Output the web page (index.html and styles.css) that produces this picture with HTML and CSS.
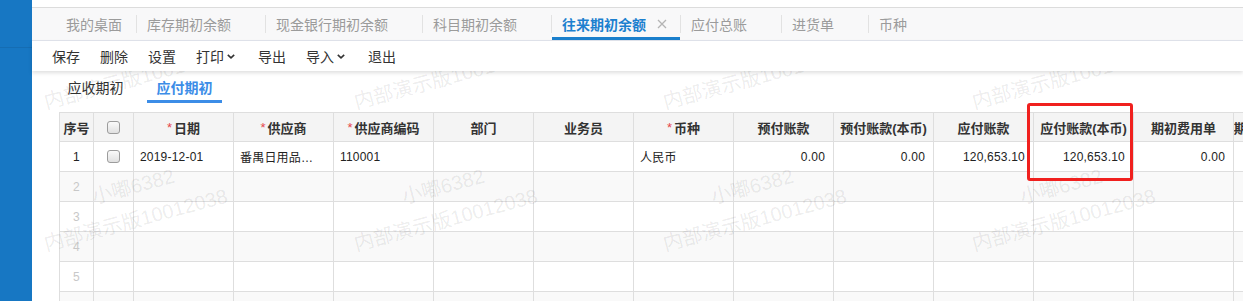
FILE: index.html
```html
<!DOCTYPE html>
<html lang="zh-CN">
<head>
<meta charset="utf-8">
<title>往来期初余额</title>
<link rel="stylesheet" href="styles.css">
</head>
<body>
<div class="sidebar"></div>
<div class="main">
  <div class="topstrip"></div>
  <div class="tabbar">
    <div class="tab first">我的桌面</div>
    <span class="sep"></span>
    <div class="tab">库存期初余额</div>
    <span class="sep"></span>
    <div class="tab">现金银行期初余额</div>
    <span class="sep"></span>
    <div class="tab">科目期初余额</div>
    <span class="sep"></span>
    <div class="tab active">往来期初余额<svg class="close" width="10" height="10" viewBox="0 0 10 10"><path d="M1 1L9 9M9 1L1 9" stroke="#b4b4b4" stroke-width="1.3" fill="none"/></svg></div>
    <span class="sep"></span>
    <div class="tab">应付总账</div>
    <span class="sep"></span>
    <div class="tab">进货单</div>
    <span class="sep"></span>
    <div class="tab">币种</div>
  </div>
  <div class="toolbar">
    <span class="tool">保存</span>
    <span class="tool">删除</span>
    <span class="tool">设置</span>
    <span class="tool">打印<svg class="chev" width="8" height="5" viewBox="0 0 8 5"><path d="M0.8 0.8L4 3.8L7.2 0.8" stroke="#333" stroke-width="1.6" fill="none"/></svg></span>
    <span class="tool">导出</span>
    <span class="tool">导入<svg class="chev" width="8" height="5" viewBox="0 0 8 5"><path d="M0.8 0.8L4 3.8L7.2 0.8" stroke="#333" stroke-width="1.6" fill="none"/></svg></span>
    <span class="tool">退出</span>
  </div>
  <div class="content">
    <div class="subtabs">
      <span class="subtab">应收期初</span>
      <span class="subtab active">应付期初</span>
    </div>
    <div class="grid">
      <div class="row head">
        <div class="cell c-no">序号</div>
        <div class="cell c-cb"><span class="cb"></span></div>
        <div class="cell"><span class="req">*</span>日期</div>
        <div class="cell"><span class="req">*</span>供应商</div>
        <div class="cell"><span class="req">*</span>供应商编码</div>
        <div class="cell">部门</div>
        <div class="cell">业务员</div>
        <div class="cell"><span class="req">*</span>币种</div>
        <div class="cell">预付账款</div>
        <div class="cell">预付账款(本币)</div>
        <div class="cell">应付账款</div>
        <div class="cell">应付账款(本币)</div>
        <div class="cell">期初费用单</div>
        <div class="cell">期初费用单(本币)</div>
      </div>
      <div class="row">
        <div class="cell c-no">1</div>
        <div class="cell c-cb"><span class="cb"></span></div>
        <div class="cell">2019-12-01</div>
        <div class="cell">番禺日用品…</div>
        <div class="cell">110001</div>
        <div class="cell"></div>
        <div class="cell"></div>
        <div class="cell">人民币</div>
        <div class="cell num">0.00</div>
        <div class="cell num">0.00</div>
        <div class="cell num">120,653.10</div>
        <div class="cell num">120,653.10</div>
        <div class="cell num">0.00</div>
        <div class="cell"></div>
      </div>
      <div class="row alt empty">
        <div class="cell c-no">2</div><div class="cell c-cb"></div><div class="cell"></div><div class="cell"></div><div class="cell"></div><div class="cell"></div><div class="cell"></div><div class="cell"></div><div class="cell"></div><div class="cell"></div><div class="cell"></div><div class="cell"></div><div class="cell"></div><div class="cell"></div>
      </div>
      <div class="row empty">
        <div class="cell c-no">3</div><div class="cell c-cb"></div><div class="cell"></div><div class="cell"></div><div class="cell"></div><div class="cell"></div><div class="cell"></div><div class="cell"></div><div class="cell"></div><div class="cell"></div><div class="cell"></div><div class="cell"></div><div class="cell"></div><div class="cell"></div>
      </div>
      <div class="row alt empty">
        <div class="cell c-no">4</div><div class="cell c-cb"></div><div class="cell"></div><div class="cell"></div><div class="cell"></div><div class="cell"></div><div class="cell"></div><div class="cell"></div><div class="cell"></div><div class="cell"></div><div class="cell"></div><div class="cell"></div><div class="cell"></div><div class="cell"></div>
      </div>
      <div class="row empty">
        <div class="cell c-no">5</div><div class="cell c-cb"></div><div class="cell"></div><div class="cell"></div><div class="cell"></div><div class="cell"></div><div class="cell"></div><div class="cell"></div><div class="cell"></div><div class="cell"></div><div class="cell"></div><div class="cell"></div><div class="cell"></div><div class="cell"></div>
      </div>
      <div class="row alt empty">
        <div class="cell c-no">6</div><div class="cell c-cb"></div><div class="cell"></div><div class="cell"></div><div class="cell"></div><div class="cell"></div><div class="cell"></div><div class="cell"></div><div class="cell"></div><div class="cell"></div><div class="cell"></div><div class="cell"></div><div class="cell"></div><div class="cell"></div>
      </div>
    </div>
    <div class="wm-layer">
      <span class="wm" style="left:63px;top:-26px">小嘟6382</span>
      <span class="wm" style="left:373px;top:-26px">小嘟6382</span>
      <span class="wm" style="left:682px;top:-26px">小嘟6382</span>
      <span class="wm" style="left:991px;top:-26px">小嘟6382</span>
      <span class="wm" style="left:15px;top:21px">内部演示版10012038</span>
      <span class="wm" style="left:325px;top:21px">内部演示版10012038</span>
      <span class="wm" style="left:634px;top:21px">内部演示版10012038</span>
      <span class="wm" style="left:943px;top:21px">内部演示版10012038</span>
      <span class="wm" style="left:63px;top:116px">小嘟6382</span>
      <span class="wm" style="left:373px;top:116px">小嘟6382</span>
      <span class="wm" style="left:682px;top:116px">小嘟6382</span>
      <span class="wm" style="left:991px;top:116px">小嘟6382</span>
      <span class="wm" style="left:15px;top:163px">内部演示版10012038</span>
      <span class="wm" style="left:325px;top:163px">内部演示版10012038</span>
      <span class="wm" style="left:634px;top:163px">内部演示版10012038</span>
      <span class="wm" style="left:943px;top:163px">内部演示版10012038</span>
    </div>
  </div>
</div>
<div class="highlight"></div>
</body>
</html>
```
FILE: styles.css
```css
html, body {
  margin: 0;
  padding: 0;
}
body {
  width: 1243px;
  height: 301px;
  overflow: hidden;
  display: flex;
  position: relative;
  background: #fff;
  font-family: "Liberation Sans", "Noto Sans CJK SC", sans-serif;
  color: #333;
}
.sidebar {
  width: 32px;
  flex: none;
  background: #1777c3;
  position: relative;
}
.sidebar::after {
  content: "";
  position: absolute;
  left: 0;
  right: 0;
  top: 47px;
  height: 1px;
  background: rgba(0, 0, 0, 0.08);
}
.main {
  flex: 1;
  min-width: 0;
  display: flex;
  flex-direction: column;
}
.topstrip {
  height: 7px;
  border-bottom: 1px solid #dcdcdc;
  flex: none;
}
.tabbar {
  height: 33px;
  box-sizing: border-box;
  flex: none;
  display: flex;
  align-items: stretch;
  background: #f8f8f9;
  border-bottom: 1px solid #e1e4ec;
  padding-left: 24px;
}
.tab {
  display: flex;
  align-items: center;
  padding: 0 34px 0 10px;
  font-size: 14px;
  color: #9b9b9b;
  white-space: nowrap;
}
.tab.first {
  padding-right: 14px;
}
.tab.active {
  color: #1c80cf;
  font-weight: bold;
  padding-right: 13px;
  box-shadow: inset 0 -3px 0 #1a7fcc;
}
.close {
  margin-left: 11px;
  flex: none;
}
.sep {
  width: 1px;
  height: 18px;
  align-self: center;
  background: #e2e2e2;
  flex: none;
}
.toolbar {
  height: 30px;
  flex: none;
  display: flex;
  align-items: center;
  padding-left: 10px;
  background: #fff;
  box-shadow: 0 2px 4px rgba(0, 0, 0, 0.13);
  position: relative;
  z-index: 3;
}
.tool {
  display: flex;
  align-items: center;
  padding: 0 10px;
  font-size: 14px;
  color: #333;
}
.chev {
  margin: 1px 3px 0;
  flex: none;
}
.content {
  flex: 1;
  position: relative;
  overflow: hidden;
}
.subtabs {
  display: flex;
  padding-left: 26px;
  margin-top: 3px;
}
.subtab {
  padding: 2px 9.5px 0;
  line-height: 24px;
  font-size: 14px;
  color: #333;
  border-bottom: 3px solid transparent;
  margin-right: 14px;
}
.subtab.active {
  color: #3c8de7;
  font-weight: bold;
  border-bottom-color: #3c8de7;
}
.grid {
  margin: 9px 0 0 27px;
  border-left: 1px solid #dedede;
  border-top: 1px solid #dedede;
  width: max-content;
}
.row {
  display: flex;
}
.cell {
  box-sizing: border-box;
  width: 100px;
  height: 30px;
  flex: none;
  border-right: 1px solid #dedede;
  border-bottom: 1px solid #dedede;
  display: flex;
  align-items: center;
  padding: 0 8px 0 6px;
  font-size: 12px;
  letter-spacing: 0.2px;
  white-space: nowrap;
  overflow: hidden;
  color: #222;
}
.cell.num {
  justify-content: flex-end;
}
.row.head .cell {
  height: 29px;
  background: #f4f4f4;
  font-size: 13px;
  letter-spacing: 0;
  font-weight: bold;
  color: #333;
  justify-content: center;
  padding: 0;
}
.cell.c-no {
  width: 34px;
  padding: 0;
  justify-content: center;
}
.cell.c-cb {
  width: 40px;
  padding: 0;
  justify-content: center;
}
.row.alt .cell {
  background: #f9f9f9;
}
.row.empty .c-no {
  color: #c8c8c8;
}
.req {
  color: #e5454c;
  font-weight: normal;
  margin-right: 2px;
}
.cb {
  width: 13px;
  height: 13px;
  box-sizing: border-box;
  border: 1px solid #9c9c9c;
  border-radius: 3px;
  background: linear-gradient(#fafafa, #e0e0e0);
}
.wm-layer {
  position: absolute;
  inset: 0;
  pointer-events: none;
  z-index: 2;
}
.wm {
  position: absolute;
  font-size: 20px;
  line-height: 20px;
  white-space: nowrap;
  color: rgba(0, 0, 0, 0.085);
  transform-origin: 0 100%;
  transform: rotate(-15deg);
}
.highlight {
  position: absolute;
  left: 1027px;
  top: 103px;
  width: 106px;
  height: 78px;
  box-sizing: border-box;
  border: 3px solid #f0201e;
  border-radius: 3px;
  z-index: 5;
  pointer-events: none;
}
```
